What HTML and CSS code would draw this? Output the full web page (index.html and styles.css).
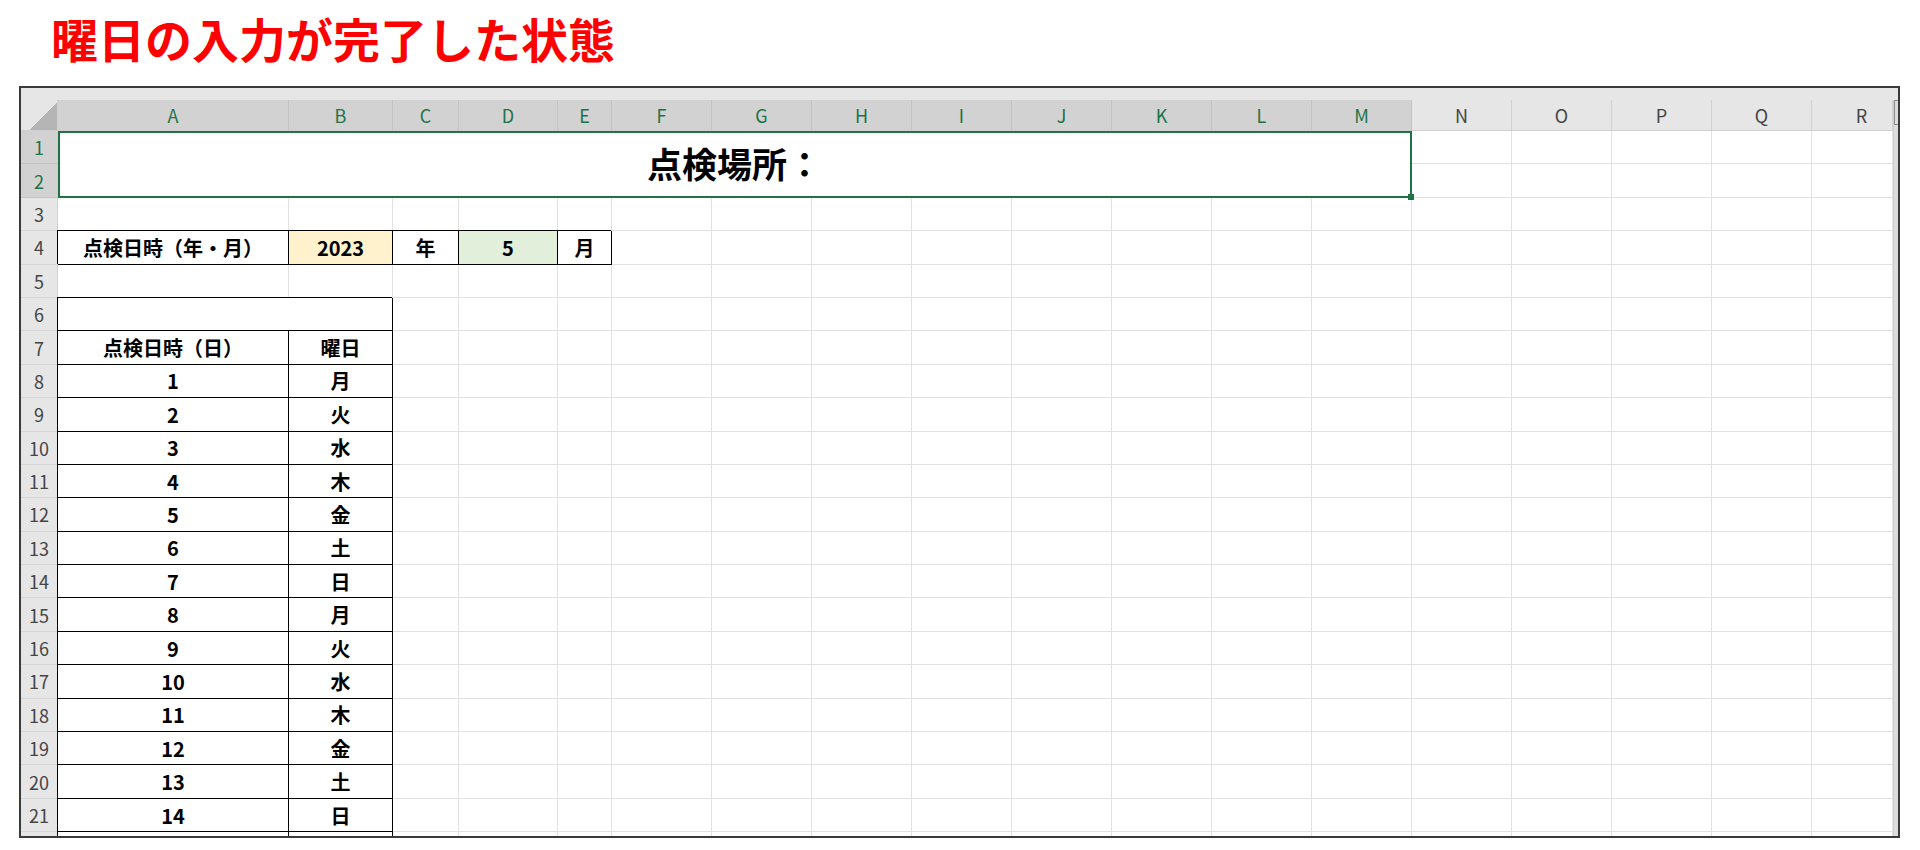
FILE: index.html
```html
<!DOCTYPE html>
<html lang="ja">
<head>
<meta charset="utf-8">
<title>曜日の入力が完了した状態</title>
<link rel="stylesheet" href="styles.css">
</head>
<body>
<h1 class="heading">曜日の入力が完了した状態</h1>
<div class="frame">
  <div class="band"></div>
  <div class="area">
    <div class="sheet">
      <!-- column headers -->
      <div class="corner"></div>
      <div class="ch s">A</div><div class="ch s">B</div><div class="ch s">C</div><div class="ch s">D</div><div class="ch s">E</div><div class="ch s">F</div><div class="ch s">G</div><div class="ch s">H</div><div class="ch s">I</div><div class="ch s">J</div><div class="ch s">K</div><div class="ch s">L</div><div class="ch s">M</div>
      <div class="ch">N</div><div class="ch">O</div><div class="ch">P</div><div class="ch">Q</div><div class="ch last">R</div>
      <!-- row 1 -->
      <div class="rh s">1</div>
      <div class="place">点検場所：</div>
      <i></i><i></i><i></i><i></i><i></i>
      <!-- row 2 -->
      <div class="rh s">2</div>
      <i></i><i></i><i></i><i></i><i></i>
      <!-- row 3 -->
      <div class="rh">3</div>
      <i></i><i></i><i></i><i></i><i></i><i></i><i></i><i></i><i></i><i></i><i></i><i></i><i></i><i></i><i></i><i></i><i></i><i></i>
      <!-- row 4 -->
      <div class="rh">4</div>
      <div class="c b">点検日時（年・月）</div>
      <div class="c b yellow">2023</div>
      <div class="c b">年</div>
      <div class="c b green">5</div>
      <div class="c b">月</div>
      <i></i><i></i><i></i><i></i><i></i><i></i><i></i><i></i><i></i><i></i><i></i><i></i><i></i>
      <!-- row 5 -->
      <div class="rh">5</div>
      <i></i><i></i><i></i><i></i><i></i><i></i><i></i><i></i><i></i><i></i><i></i><i></i><i></i><i></i><i></i><i></i><i></i><i></i>
      <!-- row 6 -->
      <div class="rh">6</div>
      <div class="c b span2"></div>
      <i></i><i></i><i></i><i></i><i></i><i></i><i></i><i></i><i></i><i></i><i></i><i></i><i></i><i></i><i></i><i></i>
      <!-- row 7 -->
      <div class="rh">7</div>
      <div class="c b">点検日時（日）</div><div class="c b">曜日</div>
      <i></i><i></i><i></i><i></i><i></i><i></i><i></i><i></i><i></i><i></i><i></i><i></i><i></i><i></i><i></i><i></i>
      <!-- rows 8-22 -->
      <div class="rh">8</div><div class="c b">1</div><div class="c b">月</div>
      <i></i><i></i><i></i><i></i><i></i><i></i><i></i><i></i><i></i><i></i><i></i><i></i><i></i><i></i><i></i><i></i>
      <div class="rh">9</div><div class="c b">2</div><div class="c b">火</div>
      <i></i><i></i><i></i><i></i><i></i><i></i><i></i><i></i><i></i><i></i><i></i><i></i><i></i><i></i><i></i><i></i>
      <div class="rh">10</div><div class="c b">3</div><div class="c b">水</div>
      <i></i><i></i><i></i><i></i><i></i><i></i><i></i><i></i><i></i><i></i><i></i><i></i><i></i><i></i><i></i><i></i>
      <div class="rh">11</div><div class="c b">4</div><div class="c b">木</div>
      <i></i><i></i><i></i><i></i><i></i><i></i><i></i><i></i><i></i><i></i><i></i><i></i><i></i><i></i><i></i><i></i>
      <div class="rh">12</div><div class="c b">5</div><div class="c b">金</div>
      <i></i><i></i><i></i><i></i><i></i><i></i><i></i><i></i><i></i><i></i><i></i><i></i><i></i><i></i><i></i><i></i>
      <div class="rh">13</div><div class="c b">6</div><div class="c b">土</div>
      <i></i><i></i><i></i><i></i><i></i><i></i><i></i><i></i><i></i><i></i><i></i><i></i><i></i><i></i><i></i><i></i>
      <div class="rh">14</div><div class="c b">7</div><div class="c b">日</div>
      <i></i><i></i><i></i><i></i><i></i><i></i><i></i><i></i><i></i><i></i><i></i><i></i><i></i><i></i><i></i><i></i>
      <div class="rh">15</div><div class="c b">8</div><div class="c b">月</div>
      <i></i><i></i><i></i><i></i><i></i><i></i><i></i><i></i><i></i><i></i><i></i><i></i><i></i><i></i><i></i><i></i>
      <div class="rh">16</div><div class="c b">9</div><div class="c b">火</div>
      <i></i><i></i><i></i><i></i><i></i><i></i><i></i><i></i><i></i><i></i><i></i><i></i><i></i><i></i><i></i><i></i>
      <div class="rh">17</div><div class="c b">10</div><div class="c b">水</div>
      <i></i><i></i><i></i><i></i><i></i><i></i><i></i><i></i><i></i><i></i><i></i><i></i><i></i><i></i><i></i><i></i>
      <div class="rh">18</div><div class="c b">11</div><div class="c b">木</div>
      <i></i><i></i><i></i><i></i><i></i><i></i><i></i><i></i><i></i><i></i><i></i><i></i><i></i><i></i><i></i><i></i>
      <div class="rh">19</div><div class="c b">12</div><div class="c b">金</div>
      <i></i><i></i><i></i><i></i><i></i><i></i><i></i><i></i><i></i><i></i><i></i><i></i><i></i><i></i><i></i><i></i>
      <div class="rh">20</div><div class="c b">13</div><div class="c b">土</div>
      <i></i><i></i><i></i><i></i><i></i><i></i><i></i><i></i><i></i><i></i><i></i><i></i><i></i><i></i><i></i><i></i>
      <div class="rh">21</div><div class="c b">14</div><div class="c b">日</div>
      <i></i><i></i><i></i><i></i><i></i><i></i><i></i><i></i><i></i><i></i><i></i><i></i><i></i><i></i><i></i><i></i>
      <div class="rh"></div><div class="c b"></div><div class="c b"></div>
      <i></i><i></i><i></i><i></i><i></i><i></i><i></i><i></i><i></i><i></i><i></i><i></i><i></i><i></i><i></i><i></i>
    </div>
    <div class="scroll"><div class="thumb"></div></div>
  </div>
</div>
</body>
</html>
```
FILE: styles.css
```css
* { box-sizing: border-box; }

html, body {
  margin: 0;
  padding: 0;
  background: #ffffff;
}

body {
  width: 1920px;
  height: 850px;
  overflow: hidden;
  font-family: "Noto Sans CJK JP", "Noto Sans", sans-serif;
}

.heading {
  margin: 14px 0 25px 0;
  padding-left: 51px;
  height: 47px;
  font-size: 47px;
  line-height: 47px;
  font-weight: 700;
  color: #ff0000;
  letter-spacing: 0;
}

.frame {
  margin-left: 19px;
  width: 1881px;
  height: 752px;
  border: 2px solid #3a3a3a;
  background: #e6e6e6;
  overflow: hidden;
  display: flex;
  flex-direction: column;
}

.band {
  height: 12px;
  flex: none;
  background: #e6e6e6;
}

.area {
  display: flex;
  flex: 1;
  min-height: 0;
  overflow: hidden;
}

.sheet {
  display: grid;
  grid-template-columns: 37px 231px 104px 66px 99px 54px repeat(12, 100px) 81px;
  grid-template-rows: 31px repeat(22, 33.4px);
  background: #ffffff;
  flex: none;
  align-self: flex-start;
}

.sheet > * {
  border-right: 1px solid #e1e1e1;
  border-bottom: 1px solid #e1e1e1;
}

.scroll {
  width: 5px;
  flex: none;
  background: #dcdcdc;
  border-left: 1px solid #cfcfcf;
}

.thumb {
  height: 25px;
  border-top: 1px solid #8a8a8a;
  border-bottom: 1px solid #8a8a8a;
  border-left: 1px solid #8a8a8a;
}

.corner {
  background-color: #e6e6e6;
  background-image: linear-gradient(to bottom right, transparent 50%, #b5b5b5 50%);
  background-size: 28px 28px;
  background-position: right 0 bottom 0;
  background-repeat: no-repeat;
  border-right-color: #d0d0d0 !important;
  border-bottom-color: #d0d0d0 !important;
}

.ch, .rh {
  display: flex;
  align-items: center;
  justify-content: center;
  font-family: "Noto Sans CJK JP", "Noto Sans", sans-serif;
  font-size: 18px;
  font-weight: 400;
  color: #444444;
  background: #e6e6e6;
}

.ch {
  border-right: 1px solid #d0d0d0 !important;
  border-bottom: 1px solid #d0d0d0 !important;
}

.ch.last {
  padding-left: 19px;
}

.rh {
  border-right: 1px solid #d0d0d0 !important;
  border-bottom: 1px solid #d6d6d6 !important;
}

.ch.s, .rh.s {
  background: #d2d2d2;
  color: #217346;
}

.ch.s {
  border-right-color: #c2c2c2 !important;
}

.rh.s {
  border-bottom-color: #c2c2c2 !important;
}

.place {
  grid-column: span 13;
  grid-row: span 2;
  position: relative;
  display: flex;
  align-items: center;
  justify-content: center;
  font-size: 35px;
  font-weight: 700;
  color: #000000;
  padding-bottom: 3px;
}

.place::after {
  content: "";
  position: absolute;
  top: 0;
  left: 0;
  right: -1px;
  bottom: -1px;
  border: 2px solid #217346;
}

.place::before {
  content: "";
  position: absolute;
  right: -3px;
  bottom: -3px;
  width: 6px;
  height: 6px;
  background: #217346;
  z-index: 1;
}

.c {
  display: flex;
  align-items: center;
  justify-content: center;
  font-size: 20px;
  font-weight: 700;
  color: #000000;
  white-space: nowrap;
}

.b {
  border-right: 1px solid #000000;
  border-bottom: 1px solid #000000;
  box-shadow: -1px -1px 0 #000000;
}

.span2 {
  grid-column: span 2;
}

.yellow {
  background: #fff2cc;
}

.green {
  background: #e2efda;
}
```
